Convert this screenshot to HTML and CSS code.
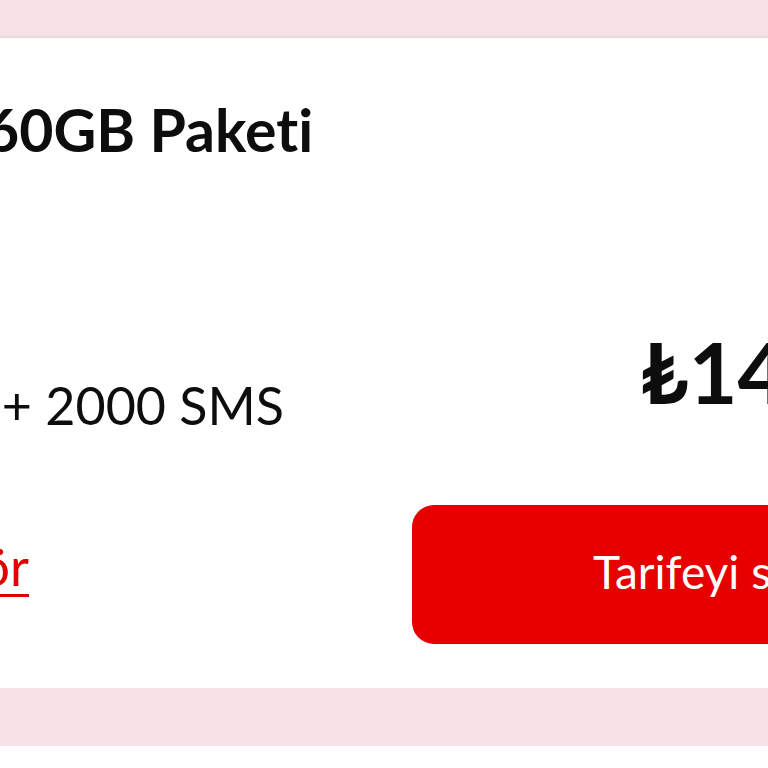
FILE: index.html
```html
<!DOCTYPE html>
<html lang="tr">
<head>
    <meta charset="UTF-8">
    <meta name="viewport" content="width=device-width, initial-scale=1.0">
    <title>Tarifeler</title>
<link rel="stylesheet" href="styles.css">
</head>
<body>
    <div class="band band-top"></div>

    <div class="tariff-card">
        <h2 class="tariff-name">60GB Paketi</h2>

        <div class="tariff-features">Sosyal + 2000 SMS</div>
        <div class="tariff-price">₺149</div>

        <a class="tariff-details" href="#">Detayları gör</a>
        <button class="tariff-select">Tarifeyi seç</button>
    </div>

    <div class="band band-bottom"></div>
</body>
</html>
```

FILE: styles.css
```css
*,*::before,*::after{
    box-sizing: border-box;
}
body{
    margin: 0;
    padding: 0;
    width: 768px;
    height: 768px;
    overflow: hidden;
    background: #ffffff;
    font-family: Lato, "Noto Sans", sans-serif;
    font-variant-ligatures: none;
    color: #0d0d0d;
}
.band{
    background: #f6e2e4;
}
.band-top{
    height: 38px;
}
.band-bottom{
    height: 58px;
}

/* card runs wider than the screen on both sides */
.tariff-card{
    width: 1134px;
    height: 650px;
    margin-left: -60px;
    padding: 62px 40px 0 45px;
    background: #ffffff;
    box-shadow: 0 0 3px rgba(0,0,0,0.14);
    display: grid;
    grid-template-columns: 427px 622px;
    align-content: start;
    align-items: start;
}
.tariff-name{
    grid-column: 1 / -1;
    margin: 0 0 168px;
    font-size: 59px;
    line-height: 1;
    font-weight: 700;
}
/* long texts in the left column hang off to the left */
.tariff-features{
    grid-column: 1;
    justify-self: end;
    margin: 52px 128px 0 0;
    white-space: nowrap;
    font-size: 52px;
    line-height: 1;
}
.tariff-price{
    grid-column: 2;
    margin: 3px 0 0 228px;
    font-size: 84px;
    line-height: 1;
    font-weight: 700;
}
.tariff-details{
    grid-column: 1;
    justify-self: end;
    margin: 109px 383px 0 0;
    white-space: nowrap;
    font-size: 52px;
    line-height: 1;
    color: #e00000;
    text-decoration: underline;
    text-decoration-thickness: 3px;
    text-underline-offset: 8px;
}
.tariff-select{
    grid-column: 2;
    margin-top: 74px;
    height: 139px;
    padding: 0 0 6px 181px;
    border: none;
    border-radius: 22px;
    background: #e60000;
    color: #ffffff;
    text-align: left;
    font-family: Lato, "Noto Sans", sans-serif;
    font-size: 46px;
    cursor: pointer;
}
```
